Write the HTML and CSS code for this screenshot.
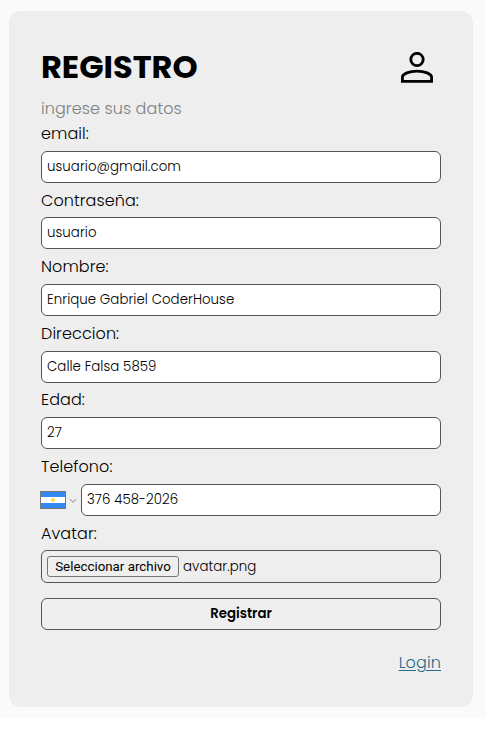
FILE: index.html
```html
<!DOCTYPE html>
<html lang="es">
<head>
<meta charset="utf-8">
<title>Registro</title>
<link rel="stylesheet" href="styles.css">
</head>
<body>
<main class="page">
  <form class="card">
    <header class="head">
      <h1 class="title">REGISTRO</h1>
      <svg class="user" viewBox="0 0 32 32" fill="none" stroke="#000" stroke-width="2.8"><circle cx="16" cy="7.5" r="6.2"/><path d="M1.4 29.3V25.2C1.4 21.7 8.5 19.1 16 19.1S30.6 21.7 30.6 25.2V29.3Z"/></svg>
    </header>
    <p class="hint">ingrese sus datos</p>
    <div class="field"><label class="label">email:</label><div class="input">usuario@gmail.com</div></div>
    <div class="field"><label class="label">Contraseña:</label><div class="input">usuario</div></div>
    <div class="field"><label class="label">Nombre:</label><div class="input">Enrique Gabriel CoderHouse</div></div>
    <div class="field"><label class="label">Direccion:</label><div class="input">Calle Falsa 5859</div></div>
    <div class="field"><label class="label">Edad:</label><div class="input">27</div></div>
    <div class="field"><label class="label">Telefono:</label>
      <div class="phone">
        <svg class="flag" viewBox="0 0 26 18"><path fill="#777" d="M0 0h26v18H0z"/><path fill="#338af3" d="M1 1h24v16H1z"/><path fill="#fff" d="M1 6h24v6H1z"/><circle cx="13" cy="9" r="2.1" fill="#ffda44"/></svg>
        <svg class="arrow" viewBox="0 0 8 6" fill="none" stroke="#888"><path d="M.8 1 4 4.3 7.2 1"/></svg>
        <div class="input grow">376 458-2026</div>
      </div>
    </div>
    <div class="field"><label class="label">Avatar:</label>
      <div class="input file"><button type="button" class="pick">Seleccionar archivo</button><span class="filename">avatar.png</span></div>
    </div>
    <button type="button" class="submit">Registrar</button>
    <a class="login" href="#">Login</a>
  </form>
</main>
</body>
</html>
```
FILE: styles.css
```css
* { box-sizing: border-box; }
body { margin: 0; background: #fff; color: #000; font: 300 16px/24px Poppins, Inter, sans-serif; letter-spacing: .08px; }
.page { width: 485px; height: 718px; padding: 11px 12px 11px 9px; background: #fafafa; }
.card { display: flex; flex-direction: column; height: 696px; padding: 32px; border-radius: 12px; background: #eee; }
.head { display: flex; justify-content: space-between; height: 54px; }
.title { margin: 0; font-size: 32px; line-height: 48px; font-weight: 700; letter-spacing: 0; }
.user { width: 32px; height: 32px; margin: 9px 8px 0 0; }
.hint { margin: 0; height: 25px; color: #808080; }
.field { height: 66.64px; flex: none; white-space: nowrap; }
.label { display: block; width: fit-content; height: 24px; margin-bottom: 4.7px; }
.input { display: flex; align-items: center; height: 32px; padding: 0 5px; border: 1px solid #555; border-radius: 6px; background: #fff; font-size: 13.33px; line-height: 20px; letter-spacing: .06px; }
.phone { display: flex; align-items: center; }
.flag { width: 26px; height: 18px; margin-left: -1px; flex: none; }
.arrow { width: 8px; height: 6px; margin: 2px 4px 0 3px; flex: none; }
.grow { flex: 1; }
.file { height: 33px; background: #eee; }
.pick { width: 132px; height: 21px; margin-right: 4px; padding: 0; border: 1px solid #767676; border-radius: 3px; background: #efefef; color: #000; font: 400 13.33px/17px Roboto, Arial, sans-serif; letter-spacing: 0; }
.filename { padding-top: 1px; }
.submit { flex: none; height: 32px; margin-top: 9.7px; border: 1px solid #555; border-radius: 6px; background: #efefef; color: #000; font: 600 13.33px/20px Poppins, Inter, sans-serif; }
.login { align-self: flex-end; margin-top: 21px; color: #246b8b; letter-spacing: .15px; text-underline-offset: 2px; }
```
